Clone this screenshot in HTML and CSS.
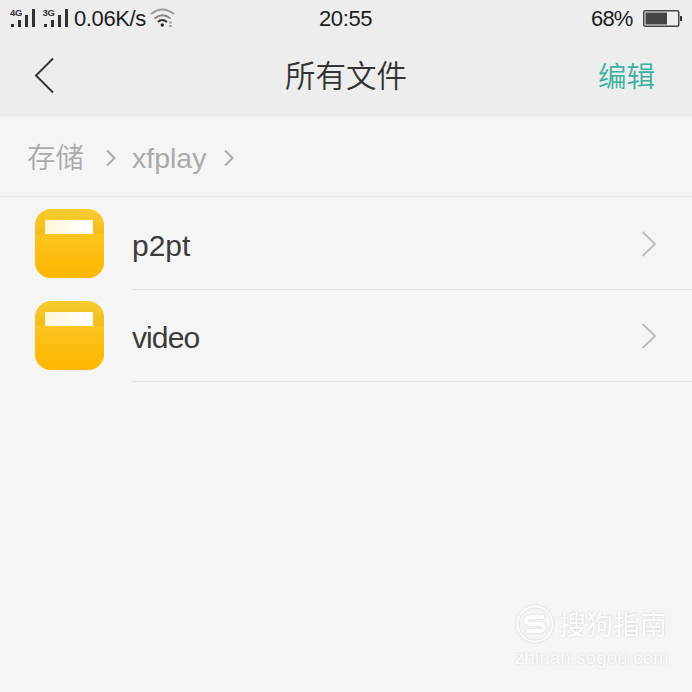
FILE: index.html
```
<!DOCTYPE html>
<html lang="zh-CN">
<head>
<meta charset="utf-8">
<title>所有文件</title>
<link rel="stylesheet" href="styles.css">
</head>
<body>
<header class="top">
  <div class="status">
    <div class="status-left">
      <div class="signal"><span class="net">4G</span><svg width="26" height="20" viewBox="0 0 26 20"><path d="M1 15h3v3H1zM8 11h3v7H8zM15 6h3v12h-3zM22 0h3v18h-3z"/></svg></div>
      <div class="signal"><span class="net">3G</span><svg width="26" height="20" viewBox="0 0 26 20"><path d="M1 15h3v3H1zM8 11h3v7H8zM15 6h3v12h-3zM22 0h3v18h-3z"/></svg></div>
      <span class="speed">0.06K/s</span>
      <svg class="wifi" width="26" height="22" viewBox="0 0 26 22" fill="none" stroke-width="2"><path d="M1 6Q12-3 24 6" stroke="#999"/><path d="M4.500 10.500Q12 4 20.500 10.500" stroke="#888"/><path d="M8 14Q12 10 17 14" stroke="#333"/><circle cx="12.300" cy="17" r="1.700" fill="#222"/><path d="M19 14.500h3M19 18h3" stroke="#aaa"/></svg>
    </div>
    <span class="clock">20:55</span>
    <div class="status-right">
      <span class="percent">68%</span>
      <svg width="39" height="18" viewBox="0 0 39 18"><rect x=".75" y=".75" width="35" height="15.500" rx="1.500" fill="none" stroke="#444" stroke-width="1.500"/><path d="M2.500 2.500H24v12H2.500z" fill="#444"/><path d="M37 6h2v5h-2z" fill="#333"/></svg>
    </div>
  </div>
  <div class="bar">
    <svg class="back" width="22" height="38" viewBox="0 0 22 38"><path d="M20 2.500 3 19.500 20 36.500" fill="none" stroke="#333" stroke-width="1.900"/></svg>
    <h1>所有文件</h1>
    <span class="edit">编辑</span>
  </div>
</header>
<nav class="crumbs">
  <span class="cjk">存储</span>
  <svg class="sep" width="12" height="18" viewBox="0 0 12 18"><path d="M2 1.500 9.500 9 2 16.500"/></svg>
  <span class="latin">xfplay</span>
  <svg class="sep" width="12" height="18" viewBox="0 0 12 18"><path d="M2 1.500 9.500 9 2 16.500"/></svg>
</nav>
<main>
  <div class="row">
    <div class="folder"><div class="paper"></div><div class="front"></div></div>
    <div class="item"><span class="name">p2pt</span><svg width="16" height="28" viewBox="0 0 16 28"><path d="M1.500 2 14 14 1.500 26"/></svg></div>
  </div>
  <div class="row">
    <div class="folder"><div class="paper"></div><div class="front"></div></div>
    <div class="item"><span class="name tight">video</span><svg width="16" height="28" viewBox="0 0 16 28"><path d="M1.500 2 14 14 1.500 26"/></svg></div>
  </div>
</main>
<aside class="mark">
  <div class="brand"><svg width="40" height="40" viewBox="0 0 40 40" fill="none"><circle cx="20" cy="20" r="17.500" stroke-width="2"/><path d="M29 13H17Q11 13 11 16.500T17 20H23Q29 20 29 23.500T23 27H11" stroke-width="4"/></svg><span>搜狗指南</span></div>
  <div class="site">zhinan.sogou.com</div>
</aside>
</body>
</html>
```
FILE: styles.css
```
* { box-sizing: border-box; }
body {
  margin: 0;
  height: 692px;
  position: relative;
  overflow: hidden;
  background: #f5f5f5;
  color: #333;
  font-family: "Liberation Sans", "Noto Sans CJK SC", sans-serif;
}
svg { display: block; flex: none; }
.top { height: 116px; background: #ededed; border-bottom: 1px solid #e8e8e8; }
.status {
  height: 36px;
  display: grid;
  grid-template-columns: 319px 1fr 101px;
  align-items: center;
  color: #1c1c1c;
  font-size: 22px;
  letter-spacing: -.4px;
  line-height: 36px;
}
.status-left { display: flex; align-items: center; padding-left: 10px; }
.signal { position: relative; width: 32.500px; fill: #333; }
.net { position: absolute; left: 0; top: -1px; font-size: 9.500px; font-weight: bold; line-height: 10px; letter-spacing: -.3px; color: #333; }
.speed { width: 76px; margin-left: -1px; }
.clock { padding-top: 1px; }
.status-right { display: flex; align-items: center; }
.percent { width: 52px; letter-spacing: -.8px; }
.bar { height: 79px; display: flex; align-items: center; padding: 0 37px 0 33px; }
.back { margin-top: -1px; }
h1 { margin: -3px 0 0 230px; font-family: "Noto Sans CJK SC", sans-serif; font-size: 30.500px; font-weight: 350; line-height: 44px; white-space: nowrap; }
.edit { margin: -2px 0 0 auto; font-size: 28.500px; font-weight: 350; color: #3bb19f; }
.crumbs { height: 81px; display: flex; align-items: center; padding-left: 27px; color: #aaa; font-size: 28.500px; border-bottom: 1px solid #e7e7e7; }
.cjk { font-weight: 350; width: 78px; margin-top: -1px; }
.latin { width: 91px; padding-top: 5px; }
.crumbs .sep { margin-right: 15px; margin-top: 3px; }
.sep path { fill: none; stroke: #aaa; stroke-width: 2; }
.row { height: 92px; display: flex; padding-left: 35px; }
.folder {
  width: 69px;
  height: 69px;
  margin-top: 12px;
  border-radius: 16px;
  overflow: hidden;
  background: linear-gradient(#f7cc32, #f1bc17 26px);
}
.paper { width: 48px; height: 14px; margin: 11px 0 0 10px; background: linear-gradient(110deg, #fff6d8, #fffef8 75%); }
.front { height: 44px; background: linear-gradient(#fbc41e, #ffb700); }
.item { flex: 1; margin-left: 28px; padding-right: 35px; display: flex; align-items: center; justify-content: space-between; border-bottom: 1px solid #e2e2e2; height: 93px; }
.name { font-size: 30px; padding-top: 6px; color: #3c3c3c; }
.tight { letter-spacing: -.9px; }
.item svg { margin-top: 2px; }
.item svg path { fill: none; stroke: #bbb; stroke-width: 1.800; }
.mark { position: absolute; left: 515px; top: 603px; color: #fcfcfc; filter: drop-shadow(0 0 1px #d2d2d2); }
.brand { display: flex; align-items: center; gap: 4px; height: 42px; font-size: 27px; line-height: 42px; white-space: nowrap; }
.brand span { padding-top: 4px; }
.brand svg { stroke: #fcfcfc; }
.site { font-size: 18px; letter-spacing: .5px; line-height: 26px; }
```
